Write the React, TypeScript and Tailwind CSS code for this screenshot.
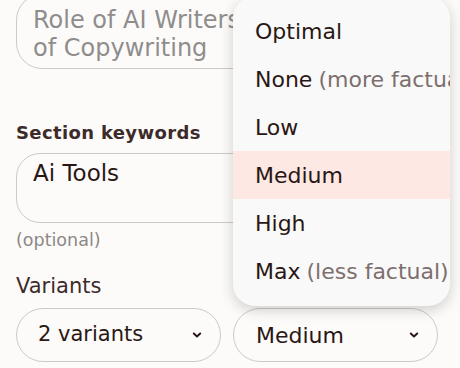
import React from 'react';

const options = [
  { label: 'Optimal' },
  { label: 'None', note: '(more factual)' },
  { label: 'Low' },
  { label: 'Medium', active: true },
  { label: 'High' },
  { label: 'Max', note: '(less factual)' },
];

const Chevron = () => (
  <svg width="14" height="14" viewBox="0 0 24 24" fill="none" stroke="#2a1714" strokeWidth="3.4" strokeLinecap="round" strokeLinejoin="round">
    <path d="M6.5 9.5l5.5 5 5.5-5" />
  </svg>
);

export default function App() {
  return (
    <div
      className="relative h-[368px] w-[460px] overflow-hidden bg-[#fcfbfa] text-[#2a1714]"
      style={{ fontFamily: '"DejaVu Sans", Inter, sans-serif' }}
    >
      <div className="ml-4 mr-[22px] flex flex-col">
        <div className="-mt-[6px] h-[75px] rounded-[26px] border border-[#cfc9c6] px-4 pt-[11px] text-[24px] leading-[28px] text-[#8f8d8c]">
          Role of AI Writers
          <br />
          of Copywriting
        </div>

        <div className="mt-[52px] text-[18px] font-bold leading-6 tracking-[0.02em] text-[#3d2b29]">Section keywords</div>
        <div className="mt-[8px] h-[70px] rounded-[24px] border border-[#cfc9c6] px-4 pt-[5px] text-[23px] leading-7 text-[#2a1714]">
          Ai Tools
        </div>
        <div className="mt-[7px] text-[17.5px] leading-5 text-[#8c8887]">(optional)</div>

        <div className="mt-[24px] text-[21px] leading-6 text-[#3d2b29]">Variants</div>
        <div className="mt-[10px] grid grid-cols-2 gap-3">
          <div className="flex h-[54px] items-center justify-between rounded-full border border-[#cfc9c6] pl-[21px] pr-[16px] text-[21px]">
            <span>2 variants</span>
            <Chevron />
          </div>
          <div className="relative flex h-[54px] items-center justify-between rounded-full border border-[#cfc9c6] pl-[22px] pr-[16px] text-[22px]">
            <span>Medium</span>
            <Chevron />
          </div>
        </div>
      </div>

      <div className="absolute left-[233px] top-[-4px] w-[217px] overflow-hidden rounded-[22px] bg-[#f9f9f9] py-[11px] shadow-[0_4px_14px_rgba(0,0,0,0.18)]">
        {options.map((o) => (
          <div
            key={o.label}
            className={`flex h-12 items-center whitespace-nowrap pl-[22px] text-[22px] ${o.active ? 'bg-[#fde8e4]' : ''}`}
          >
            <span className="text-[#2a1714]">{o.label}</span>
            {o.note && <span className="ml-[6px] text-[#7d6f6d]">{o.note}</span>}
          </div>
        ))}
      </div>
    </div>
  );
}
